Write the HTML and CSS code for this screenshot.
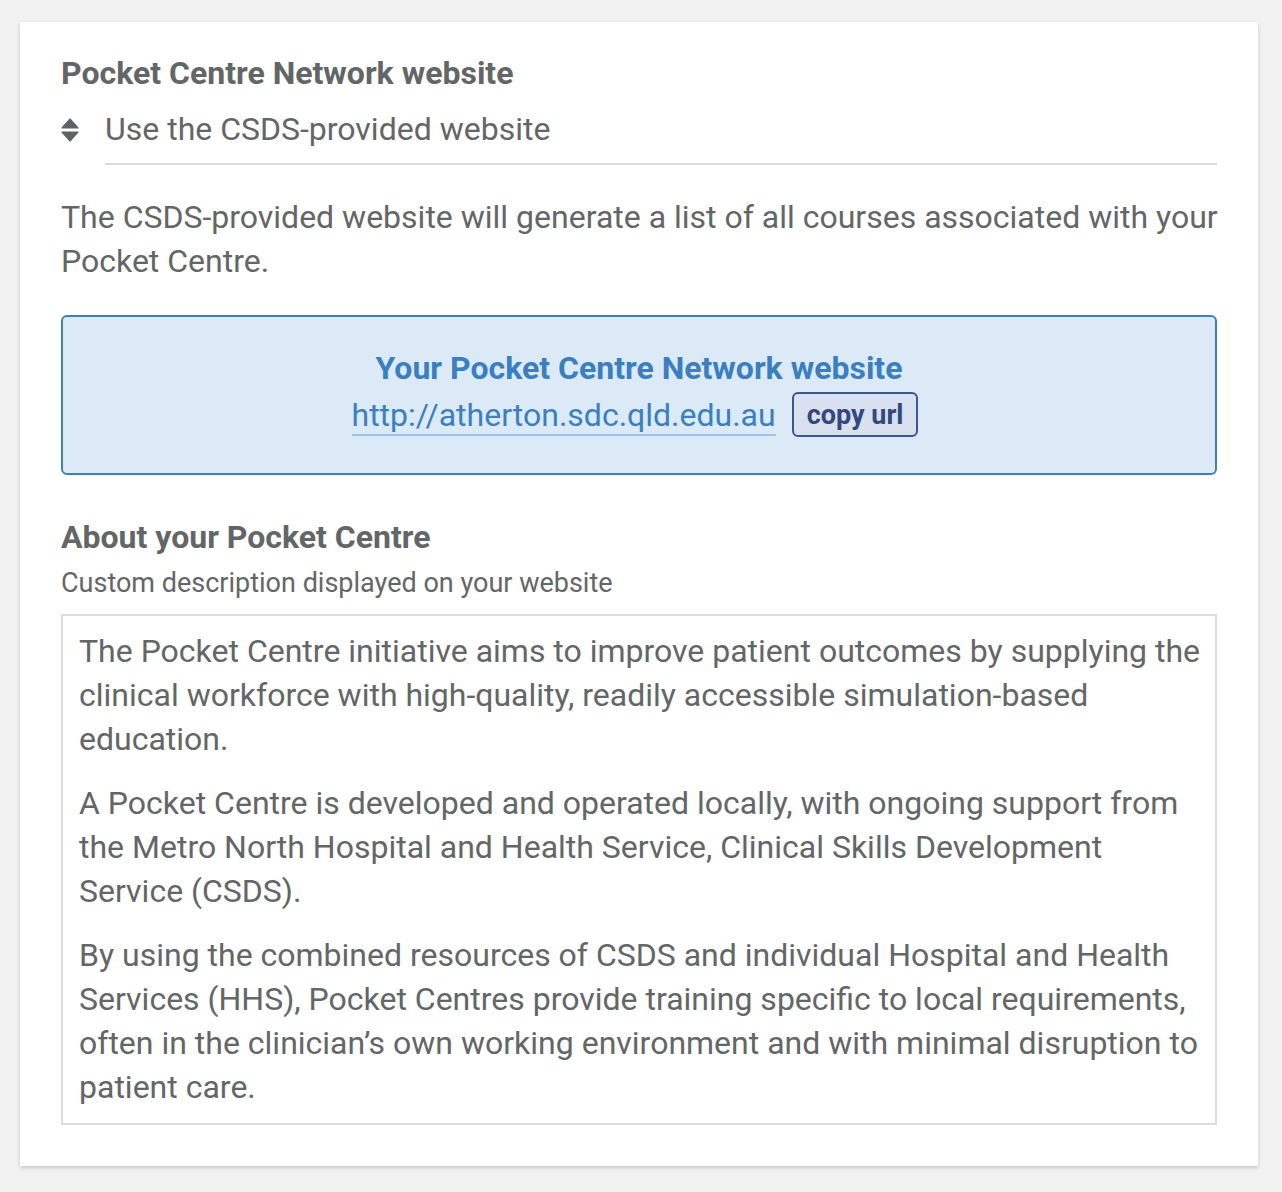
FILE: index.html
```html
<!DOCTYPE html>
<html lang="en">
<head>
<meta charset="utf-8">
<title>Pocket Centre Network website</title>
<link rel="stylesheet" href="styles.css">
</head>
<body>
<main class="card">
  <h2 class="heading">Pocket Centre Network website</h2>
  <div class="select-row">
    <svg class="select-icon" width="18" height="24" viewBox="0 0 18 24" aria-hidden="true">
      <path d="M9 1 L17 10 L1 10 Z" fill="#5f6263" stroke="#5f6263" stroke-width="1.2" stroke-linejoin="round"/>
      <path d="M9 23 L17 14 L1 14 Z" fill="#5f6263" stroke="#5f6263" stroke-width="1.2" stroke-linejoin="round"/>
    </svg>
    <div class="select-value">Use the CSDS-provided website</div>
  </div>
  <p class="lead">The CSDS-provided website will generate a list of all courses associated with your Pocket Centre.</p>
  <section class="notice">
    <div class="notice-title">Your Pocket Centre Network website</div>
    <div class="notice-url">
      <a class="url-link" href="#">http://atherton.sdc.qld.edu.au</a>
      <button class="copy-btn" type="button">copy url</button>
    </div>
  </section>
  <h2 class="heading heading-about">About your Pocket Centre</h2>
  <div class="hint">Custom description displayed on your website</div>
  <div class="textarea">
    <p>The Pocket Centre initiative aims to improve patient outcomes by supplying the clinical workforce with high-quality, readily accessible simulation-based education.</p>
    <p>A Pocket Centre is developed and operated locally, with ongoing support from the Metro North Hospital and Health Service, Clinical Skills Development Service (CSDS).</p>
    <p>By using the combined resources of CSDS and individual Hospital and Health Services (HHS), Pocket Centres provide training specific to local requirements, often in the clinician’s own working environment and with minimal disruption to patient care.</p>
  </div>
</main>
</body>
</html>
```

FILE: styles.css
```css
html, body {
  margin: 0;
  padding: 0;
  background: #f2f2f2;
}

body {
  font-family: Roboto, "Liberation Sans", sans-serif;
  color: #636667;
  padding: 22px 24px 26px 20px;
}

.card {
  box-sizing: border-box;
  width: 1238px;
  background: #ffffff;
  padding: 31px 41px 41px 41px;
  box-shadow: 0 2px 4px rgba(0, 0, 0, 0.18);
}

.heading {
  margin: 0;
  font-size: 32px;
  line-height: 40px;
  font-weight: 700;
  color: #636667;
}

.select-row {
  display: flex;
  align-items: flex-start;
  margin-top: 14px;
}

.select-icon {
  flex: none;
  margin-top: 11px;
  margin-right: 26px;
}

.select-value {
  flex: 1;
  font-size: 32px;
  line-height: 44px;
  padding-bottom: 12px;
  border-bottom: 2px solid #dcdcdc;
}

.lead {
  margin: 30px -8px 0 0;
  font-size: 32px;
  line-height: 44px;
}

.notice {
  margin-top: 32px;
  height: 160px;
  box-sizing: border-box;
  background: #dceaf7;
  border: 2px solid #3d80c2;
  border-radius: 6px;
  padding-top: 31px;
  text-align: center;
}

.notice-title {
  font-size: 32px;
  line-height: 40px;
  font-weight: 700;
  color: #3a7fc1;
}

.notice-url {
  display: flex;
  justify-content: center;
  align-items: center;
  gap: 16px;
  margin-top: 4px;
  padding-right: 8px;
}

.url-link {
  font-size: 32px;
  line-height: 38px;
  color: #3a80c1;
  text-decoration: none;
  border-bottom: 2px solid #9cc4ea;
  margin-top: 2px;
}

.copy-btn {
  box-sizing: border-box;
  height: 45px;
  padding: 0 13px;
  font-family: Roboto, "Liberation Sans", sans-serif;
  font-size: 27px;
  font-weight: 700;
  color: #33487f;
  background: #d9e0f0;
  border: 2px solid #3b5694;
  border-radius: 6px;
}

.heading-about {
  margin-top: 42px;
}

.hint {
  margin-top: 9px;
  font-size: 27px;
  line-height: 34px;
}

.textarea {
  margin-top: 14px;
  border: 2px solid #dcdcdc;
  padding: 13px 10px 14px 16px;
  box-sizing: border-box;
}

.textarea p {
  margin: 0 0 20px;
  font-size: 32px;
  line-height: 44px;
}

.textarea p:last-child {
  margin-bottom: 0;
}
```
